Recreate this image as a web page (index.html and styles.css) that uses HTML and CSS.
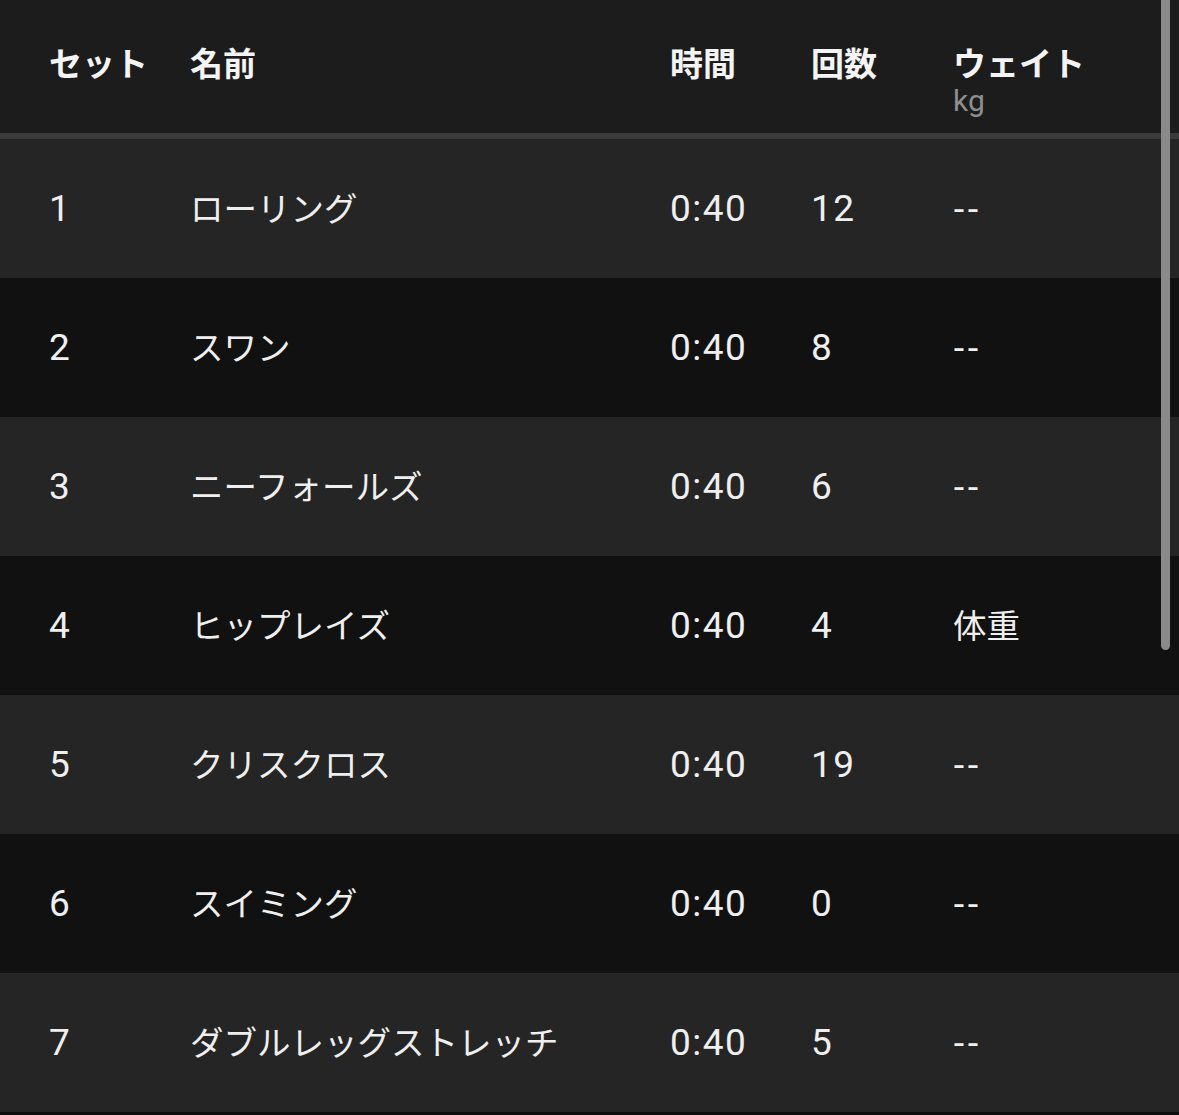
FILE: index.html
```html
<!DOCTYPE html>
<html lang="ja">
<head>
<meta charset="utf-8">
<link rel="stylesheet" href="styles.css">
</head>
<body>
<div class="table">
  <div class="head">
    <div class="hcell">セット</div>
    <div class="hcell">名前</div>
    <div class="hcell">時間</div>
    <div class="hcell">回数</div>
    <div class="hcell">ウェイト<span class="unit">kg</span></div>
  </div>
  <div class="divider"></div>
  <div class="row odd"><div class="num">1</div><div class="jp">ローリング</div><div class="num">0:40</div><div class="num">12</div><div class="dash">--</div></div>
  <div class="row even"><div class="num">2</div><div class="jp">スワン</div><div class="num">0:40</div><div class="num">8</div><div class="dash">--</div></div>
  <div class="row odd"><div class="num">3</div><div class="jp">ニーフォールズ</div><div class="num">0:40</div><div class="num">6</div><div class="dash">--</div></div>
  <div class="row even"><div class="num">4</div><div class="jp">ヒップレイズ</div><div class="num">0:40</div><div class="num">4</div><div class="jp">体重</div></div>
  <div class="row odd"><div class="num">5</div><div class="jp">クリスクロス</div><div class="num">0:40</div><div class="num">19</div><div class="dash">--</div></div>
  <div class="row even"><div class="num">6</div><div class="jp">スイミング</div><div class="num">0:40</div><div class="num">0</div><div class="dash">--</div></div>
  <div class="row odd"><div class="num">7</div><div class="jp">ダブルレッグストレッチ</div><div class="num">0:40</div><div class="num">5</div><div class="dash">--</div></div>
</div>
<div class="scrollbar"></div>
</body>
</html>
```
FILE: styles.css
```css
html, body {
  margin: 0;
  padding: 0;
  background: #0e0e0e;
  height: 1115px;
  overflow: hidden;
}
body {
  position: relative;
  font-family: Roboto, "Noto Sans CJK JP", sans-serif;
  color: #f2f2f2;
}
.table {
  width: 1179px;
}
.head, .row {
  display: grid;
  grid-template-columns: 141px 480px 141px 142px 1fr;
  padding-left: 49px;
}
.head {
  background: #1c1c1c;
  height: 133px;
  box-sizing: border-box;
  padding-top: 42px;
  align-items: start;
}
.hcell {
  font-family: "Noto Sans CJK JP", sans-serif;
  font-weight: 700;
  font-size: 33px;
  line-height: 40px;
  display: flex;
  flex-direction: column;
  align-items: flex-start;
  color: #f4f4f4;
}
.unit {
  font-family: Roboto, sans-serif;
  font-weight: 400;
  font-size: 30px;
  line-height: 32px;
  margin-top: 3px;
  color: #8e8e8e;
}
.divider {
  height: 6px;
  background: #3a3a3a;
}
.row {
  height: 139px;
  align-items: center;
}
.odd { background: #252525; }
.even { background: #111111; }
.num {
  font-family: Roboto, sans-serif;
  font-size: 37px;
  line-height: 40px;
  letter-spacing: 1.5px;
  color: #efefef;
}
.dash {
  font-family: "Noto Sans", sans-serif;
  font-size: 37px;
  line-height: 40px;
  letter-spacing: 2px;
  padding-bottom: 5px;
  color: #efefef;
}
.jp {
  font-family: "Noto Sans CJK JP", sans-serif;
  font-size: 33.5px;
  line-height: 40px;
  padding-bottom: 4px;
  color: #efefef;
}
.scrollbar {
  position: absolute;
  left: 1161px;
  top: -10px;
  width: 9px;
  height: 660px;
  border-radius: 5px;
  background: #8a8a8a;
}
```
